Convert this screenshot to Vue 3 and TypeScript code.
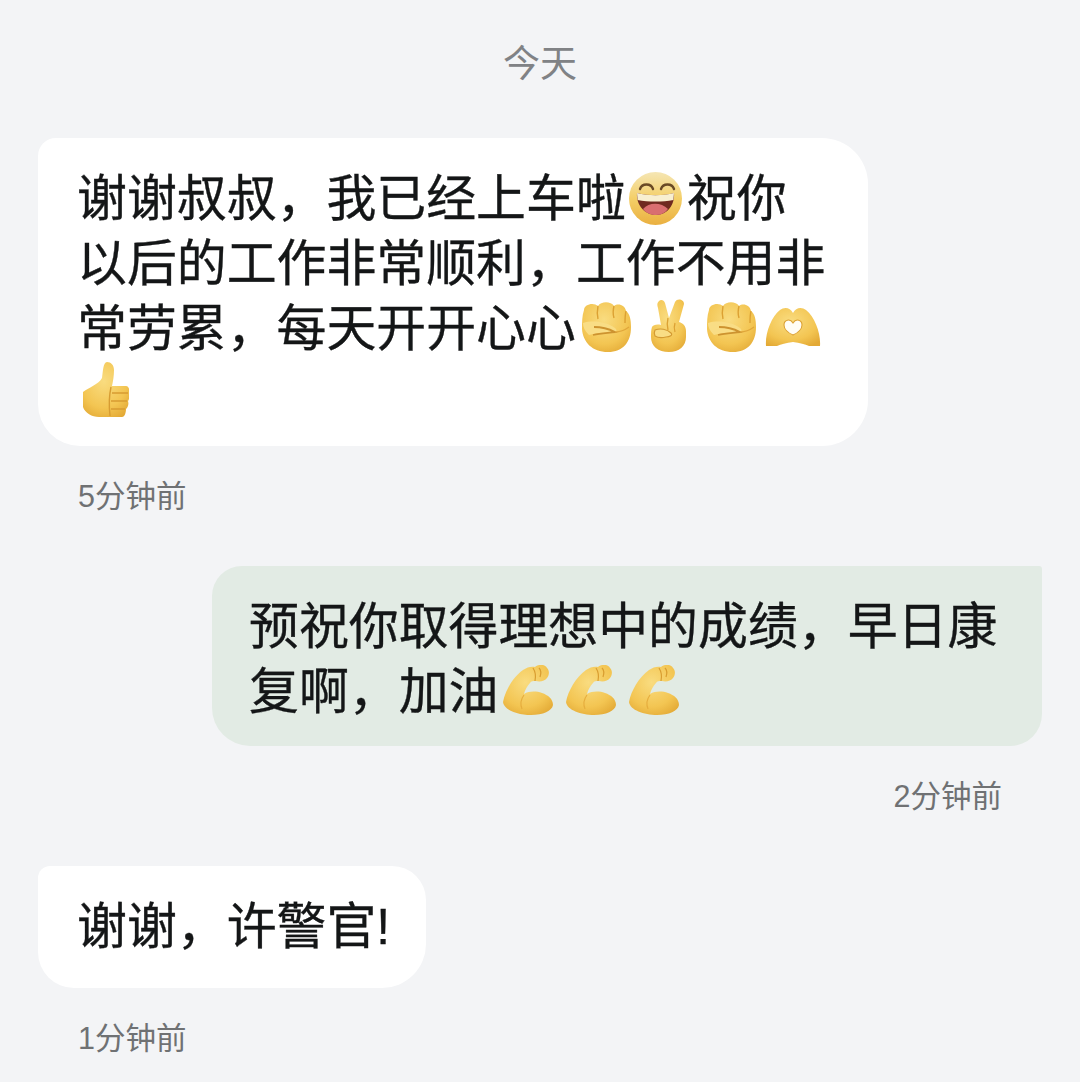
<script setup lang="ts">
const arms: number[] = [1, 2, 3]
</script>

<template>
  <div class="page">
    <svg class="defs" width="0" height="0" aria-hidden="true">
      <defs>
        <radialGradient id="skin" cx="45%" cy="35%" r="75%">
          <stop offset="0%" stop-color="#f9dc80" />
          <stop offset="65%" stop-color="#f3c552" />
          <stop offset="100%" stop-color="#e3a935" />
        </radialGradient>
        <linearGradient id="face" x1="0" y1="0" x2="0" y2="1">
          <stop offset="0%" stop-color="#f5e6b4" />
          <stop offset="50%" stop-color="#f4cf68" />
          <stop offset="100%" stop-color="#eab040" />
        </linearGradient>
        <symbol id="grin" viewBox="0 0 53 53">
          <circle cx="26.500" cy="26.500" r="26.500" fill="url(#face)" />
          <path d="M11 17c2-6 11-6 13 0M32 17c2-6 11-6 13 0" fill="none" stroke="#6a4a25" stroke-width="2.400" stroke-linecap="round" />
          <path d="M8 21c12 3 26 3 37 0 1 12-7 22-18 22S7 33 8 21z" fill="#6f2a20" />
          <path d="M8 21c12 3 25 3 37 0l-.6 7c-11 2-25 2-35.800 0z" fill="#f8efd0" />
          <path d="M14 37c6-7 18-7 25 0-3 4-7 6-12 6s-10-2-13-6z" fill="#d96f70" />
        </symbol>
        <symbol id="fist" viewBox="0 0 50 51">
          <path d="M3 9C3 3 13 1 17 5c3-5 13-5 16 0 4-3 11-1 12 5 4 3 5 9 5 16 0 15-8 25-23 25C11 51 2 41 1 28c0-7 0-13 2-19z" fill="url(#skin)" />
          <path d="M17 5c-1 5-1 9 0 13M33 5c-1 4-1 9 0 12M45 10c-1 4-1 8-1 12" stroke="#dca133" stroke-width="1.400" fill="none" />
          <path d="M2 22c10-3 24-1 32 5 3 3 1 5-3 5-8-1-15 0-23 2-3-3-6-7-6-12z" fill="#f9dd85" />
          <path d="M13 26c7 0 15 2 21 5-7 1-14 1-22 3" stroke="#cd9330" stroke-width="1.800" fill="none" />
          <path d="M34 31c5 0 10-2 14-5" stroke="#e0a63a" stroke-width="1.200" fill="none" />
        </symbol>
        <symbol id="peace" viewBox="0 0 36 53">
          <path d="M9 2c2-2 5-1 6 2l4 15L25 3c2-4 9-3 9 2l-5 18c4 1 7 4 7 9v6c0 9-7 15-17 15C8 53 1 47 1 38c0-4 0-7 1-10 1-2 5-3 9-2L8 9C7 6 7 4 9 2z" fill="url(#skin)" />
          <path d="M5 31c5-2 12-1 16 3 2 2-1 4-5 4-4 1-8 1-11-1-1-2-1-4 0-6z" fill="#f9dd85" stroke="#d39a32" stroke-width="1.200" />
          <path d="M18 19c-1 4-1 8 0 12M25 24c-1 3-1 6 0 9" stroke="#dca133" stroke-width="1.300" fill="none" />
        </symbol>
        <symbol id="heart" viewBox="0 0 56 40">
          <path d="M1 39C0 27 6 10 15 3c4-3 10-3 13 3 3-6 9-6 13-3 9 7 15 24 14 36l-11 0c-4-2-9-3-16-4-7 1-12 2-16 4z" fill="url(#skin)" />
          <path d="M28 28c-5-2-9-6-9-10 0-5 6-7 9-2 3-5 9-3 9 2 0 4-4 8-9 10z" fill="#fffdf6" stroke="#dca133" stroke-width="1.100" />
        </symbol>
        <symbol id="thumb" viewBox="0 0 46 55">
          <path d="M24 0c4 0 7 3 7 8 0 6-1 11-2 16h14c3 0 4 5 3 7 1 2 0 7-1 8 1 3 0 6-2 8 0 3-1 8-4 8H16C9 55 2 51 0 45V30c5-4 16-8 19-14 1-6 1-16 5-16z" fill="url(#skin)" />
          <path d="M28 25c-2 9-2 20-1 29" stroke="#d79c32" stroke-width="1.400" fill="none" />
          <path d="M29 31h16M28 39h16M28 47h14" stroke="#d79c32" stroke-width="1.400" fill="none" />
        </symbol>
        <symbol id="arm" viewBox="0 0 50 50">
          <path d="M0 37C2 26 10 12 20 5c4-3 9-4 12-3 3-3 10-3 12 1 3 3 2 8 0 10-2 3-7 4-11 3-3 0-5 0-6 2-3 3-5 7-6 11 5-3 12-3 18-1 6 2 11 6 11 12-1 6-10 10-22 10C15 50 1 45 0 37z" fill="url(#skin)" />
          <path d="M30 3c2 3 3 8 2 13M36 3c2 2 2 6 1 9" stroke="#d99d30" stroke-width="1.200" fill="none" />
          <path d="M21 30c-3 4-4 9-2 14" stroke="#e6ae3e" stroke-width="1.200" fill="none" />
        </symbol>
      </defs>
    </svg>

    <div class="day">今天</div>

    <div class="msg">
      <div class="bubble left first">
        谢谢叔叔，我已经上车啦<svg class="emoji e-grin"><use href="#grin" /></svg>祝你<br />以后的工作非常顺利，工作不用非<br />常劳累，每天开开心心<svg class="emoji e-fist1"><use href="#fist" /></svg><svg class="emoji e-peace"><use href="#peace" /></svg><svg class="emoji e-fist2"><use href="#fist" /></svg><svg class="emoji e-heart"><use href="#heart" /></svg><br /><svg class="emoji e-thumb"><use href="#thumb" /></svg>
      </div>
      <div class="time">5分钟前</div>
    </div>

    <div class="msg mine">
      <div class="bubble right">
        预祝你取得理想中的成绩，早日康<br />复啊，加油<svg v-for="a in arms" :key="a" class="emoji e-arm"><use href="#arm" /></svg>
      </div>
      <div class="time">2分钟前</div>
    </div>

    <div class="msg third">
      <div class="bubble left last">谢谢，许警官!</div>
      <div class="time">1分钟前</div>
    </div>
  </div>
</template>

<style>
html, body { margin: 0; background: #f3f4f6; }
</style>

<style scoped>
.page {
  width: 1080px;
  height: 1082px;
  overflow: hidden;
  background: #f3f4f6;
  box-sizing: border-box;
  font-family: "Liberation Sans", "Noto Sans CJK SC", sans-serif;
  display: flex;
  flex-direction: column;
  padding: 0 38px;
}
.defs { position: absolute; }
.day {
  margin-top: 42px;
  height: 46px;
  line-height: 46px;
  text-align: center;
  font-size: 37px;
  color: #808285;
}
.msg { display: flex; flex-direction: column; align-items: flex-start; }
.mine { align-items: flex-end; margin-top: 50px; }
.third { margin-top: 50px; }
.first { margin-top: 50px; }
.bubble {
  font-size: 49.900px;
  line-height: 65px;
  color: #141617;
  -webkit-text-stroke: 0.35px #141617;
  white-space: nowrap;
  box-sizing: border-box;
}
.left {
  background: #fff;
  width: 830px;
  height: 308px;
  padding: 29px 39px 0;
  border-radius: 18px 46px 46px 42px;
}
.last {
  width: 388px;
  height: 122px;
  padding: 29px 39px 0;
  border-radius: 12px 34px 44px 36px;
}
.right {
  background: #e2ebe4;
  width: 830px;
  height: 180px;
  padding: 29px 40px 0 37px;
  border-radius: 30px 3px 32px 38px;
}
.emoji {
  display: inline-block;
  filter: blur(0.4px);
}
.e-grin { width: 53px; height: 53px; margin: 0 5px 0 3px; vertical-align: -9px; }
.e-fist1 { width: 50px; height: 51px; margin-left: 5px; vertical-align: -6px; }
.e-peace { width: 36px; height: 53px; margin-left: 19px; vertical-align: -6px; }
.e-fist2 { width: 50px; height: 51px; margin-left: 20px; vertical-align: -6px; }
.e-heart { width: 56px; height: 40px; margin-left: 9px; vertical-align: -1px; }
.e-thumb { width: 46px; height: 55px; margin-left: 6px; vertical-align: -6px; }
.e-arm { width: 50px; height: 50px; margin-left: 13px; vertical-align: -6px; }
.e-arm:first-of-type { margin-left: 5px; }
.time {
  margin-top: 30px;
  height: 40px;
  line-height: 40px;
  font-size: 30.500px;
  color: #6f7173;
  padding: 0 40px;
}
</style>
